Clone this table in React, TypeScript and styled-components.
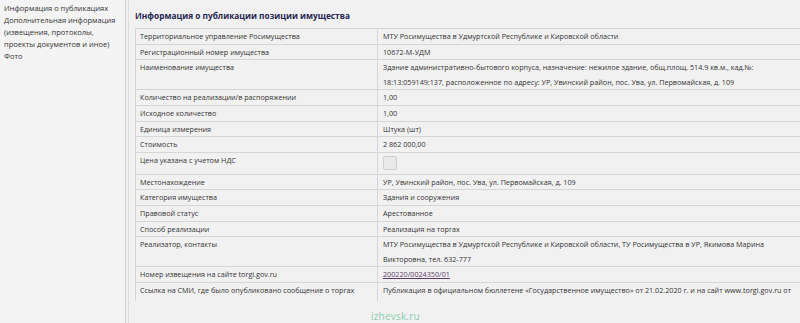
import React from "react";
import styled, { createGlobalStyle } from "styled-components";

const Global = createGlobalStyle`
  html, body { margin: 0; padding: 0; background: #f1f1f1; overflow: hidden; }
  body { width: 800px; height: 323px; font-family: "Open Sans", "Liberation Sans", sans-serif; }
`;

const Page = styled.div`
  display: flex;
  width: 800px;
  height: 323px;
  position: relative;
  background: #f1f1f1;
  overflow: hidden;
`;

const Sidebar = styled.nav`
  width: 126px;
  flex: none;
  border-right: 1px solid #d2d2d2;
  background: #f4f4f4;
  padding: 2px 0 0 4px;
  box-sizing: border-box;
  display: flex;
  flex-direction: column;
`;

const SideLink = styled.div`
  font-size: 7.5px;
  line-height: 12px;
  color: #333333;
`;

const Main = styled.main`
  flex: none;
  width: 720px;
  margin-left: 2px;
  border-left: 1px solid #dcdcdc;
  padding: 9px 0 0 6px;
  box-sizing: border-box;
`;

const Title = styled.h2`
  margin: 0 0 5px 0;
  font-size: 8.3px;
  line-height: 14px;
  font-weight: 700;
  color: #262650;
`;

const Table = styled.table`
  border-collapse: collapse;
  table-layout: fixed;
  width: 667px;
  font-size: 7.2px;
  color: #333333;
`;

const Row = styled.tr<{ $last?: boolean }>`
  border-top: 1px solid #d6d6d6;
  border-bottom: ${(p) => (p.$last ? "none" : "1px solid #d6d6d6")};
`;

const Label = styled.td<{ $last?: boolean }>`
  width: 233px;
  border-left: 1px solid #d6d6d6;
  border-right: 1px solid #d6d6d6;
  padding: ${(p) => (p.$last ? "0 4px 3px" : "0 4px")};
  line-height: 14.6px;
  vertical-align: top;
  white-space: nowrap;
`;

const Value = styled.td<{ $tall?: boolean }>`
  padding: ${(p) => (p.$tall ? "3.5px 5px" : "0 5px")};
  line-height: 14.6px;
  vertical-align: top;
`;

const Check = styled.span`
  display: block;
  width: 12px;
  height: 12px;
  border: 1px solid #cfcfcf;
  border-radius: 2px;
  background: #e9e9e9;
`;

const Link = styled.a`
  color: #5b3b6b;
  text-decoration: underline;
`;

const Watermark = styled.div`
  position: absolute;
  left: 371px;
  top: 309px;
  font-size: 10px;
  color: #8ccfb0;
  letter-spacing: 0.2px;
`;

const rows: { label: string; value: React.ReactNode; tall?: boolean }[] = [
  { label: "Территориальное управление Росимущества", value: "МТУ Росимущества в Удмуртской Республике и Кировской области" },
  { label: "Регистрационный номер имущества", value: "10672-М-УДМ" },
  {
    label: "Наименование имущества",
    value:
      "Здание административно-бытового корпуса, назначение: нежилое здание, общ.площ. 514.9 кв.м., кад.№: 18:13:059149:137, расположенное по адресу: УР, Увинский район, пос. Ува, ул. Первомайская, д. 109",
  },
  { label: "Количество на реализации/в распоряжении", value: "1,00" },
  { label: "Исходное количество", value: "1,00" },
  { label: "Единица измерения", value: "Штука (шт)" },
  { label: "Стоимость", value: "2 862 000,00" },
  { label: "Цена указана с учетом НДС", value: <Check />, tall: true },
  { label: "Местонахождение", value: "УР, Увинский район, пос. Ува, ул. Первомайская, д. 109" },
  { label: "Категория имущества", value: "Здания и сооружения" },
  { label: "Правовой статус", value: "Арестованное" },
  { label: "Способ реализации", value: "Реализация на торгах" },
  {
    label: "Реализатор, контакты",
    value:
      "МТУ Росимущества в Удмуртской Республике и Кировской области, ТУ Росимущества в УР, Якимова Марина Викторовна, тел. 632-777",
  },
  { label: "Номер извещения на сайте torgi.gov.ru", value: <Link href="#">200220/0024350/01</Link> },
  {
    label: "Ссылка на СМИ, где было опубликовано сообщение о торгах",
    value:
      "Публикация в официальном бюллетене «Государственное имущество» от 21.02.2020 г. и на сайт www.torgi.gov.ru от",
  },
];

export default function App() {
  return (
    <>
      <Global />
      <Page>
        <Sidebar>
          <SideLink>Информация о публикациях</SideLink>
          <SideLink>Дополнительная информация (извещения, протоколы, проекты документов и иное)</SideLink>
          <SideLink>Фото</SideLink>
        </Sidebar>
        <Main>
          <Title>Информация о публикации позиции имущества</Title>
          <Table>
            <tbody>
              {rows.map((r, i) => {
                const last = i === rows.length - 1;
                return (
                  <Row key={i} $last={last}>
                    <Label $last={last}>{r.label}</Label>
                    <Value $tall={r.tall}>{r.value}</Value>
                  </Row>
                );
              })}
            </tbody>
          </Table>
        </Main>
        <Watermark>izhevsk.ru</Watermark>
      </Page>
    </>
  );
}
